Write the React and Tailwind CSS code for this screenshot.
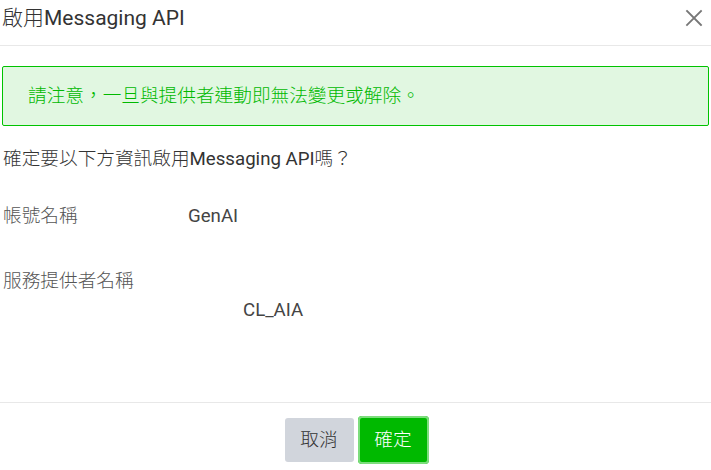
function C({ children }) {
  return <span className="font-light">{children}</span>;
}

export default function App() {
  return (
    <div className="w-[711px] h-[470px] bg-white text-[#333] overflow-hidden flex flex-col font-['Roboto','Noto_Sans_CJK_TC',sans-serif]">
      <div className="h-[46px] shrink-0 border-b border-[#e8e8e8] flex items-start justify-between pl-[2px] pr-[6px] pt-[3px]">
        <div className="text-[21px] leading-[30px] text-[#333]"><C>啟用</C>Messaging API</div>
        <button className="mt-[4px] w-[22px] h-[22px] flex items-center justify-center text-[#777]">
          <svg width="18" height="18" viewBox="0 0 18 18" fill="none" stroke="currentColor" strokeWidth="1.8" strokeLinecap="square">
            <path d="M2 2 L16 16 M16 2 L2 16" />
          </svg>
        </button>
      </div>
      <div className="mt-[20px] mx-[2px] h-[60px] shrink-0 border border-[#00c300] bg-[#e1f7e1] rounded-[2px] flex items-center pl-[25px]">
        <span className="text-[18.67px] leading-[24px] text-[#00b900]"><C>請注意，一旦與提供者連動即無法變更或解除。</C></span>
      </div>
      <div className="mt-[21px] pl-[3px] text-[18.67px] leading-[24px] text-[#333]"><C>確定要以下方資訊啟用</C>Messaging API<C>嗎？</C></div>
      <div className="mt-[33px] pl-[3px] flex text-[18.67px] leading-[24px] text-[#555]">
        <div className="w-[185px]"><C>帳號名稱</C></div>
        <div className="text-[#444]">GenAI</div>
      </div>
      <div className="mt-[41px] pl-[3px] text-[18.67px] leading-[24px] text-[#555]"><C>服務提供者名稱</C></div>
      <div className="mt-[5px] pl-[243px] text-[18.67px] leading-[24px] text-[#444]">CL_AIA</div>
      <div className="flex-1" />
      <div className="h-[68px] shrink-0 border-t border-[#e8e8e8] flex justify-center items-start pt-[13px] gap-[4px] pl-[2px]">
        <button className="mt-[2px] w-[69px] h-[44px] rounded-[3px] bg-[#d1d5dc] text-[18.67px] text-[#333] flex items-center justify-center"><C>取消</C></button>
        <button className="w-[71px] h-[48px] rounded-[4px] bg-[#00b900] text-[18.67px] text-white flex items-center justify-center ring-2 ring-inset ring-[#7ddd7d] border-0">
          <C>確定</C>
        </button>
      </div>
    </div>
  );
}
